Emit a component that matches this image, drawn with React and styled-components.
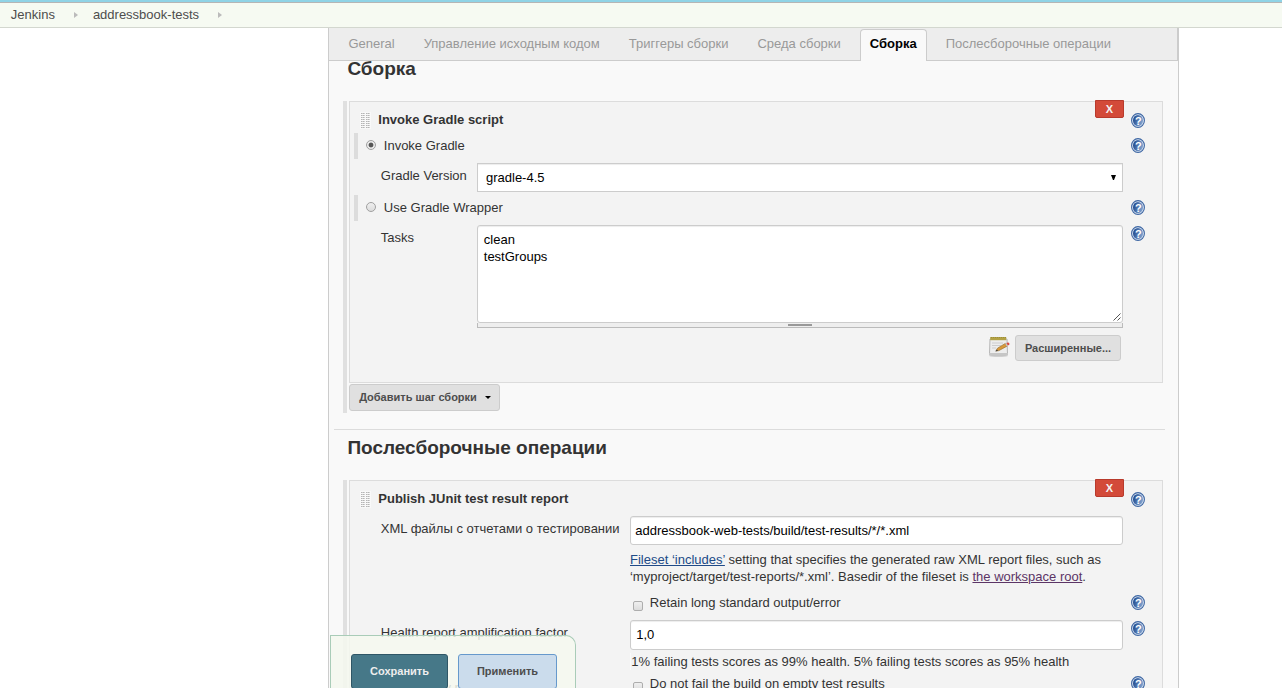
import React from 'react';
import styled, { createGlobalStyle, css } from 'styled-components';

const GlobalStyle = createGlobalStyle`
  * { box-sizing: border-box; }
  body {
    margin: 0;
    background: #fff;
    color: #333;
    font: 13px/17px "Liberation Sans", Arial, sans-serif;
    overflow: hidden;
  }
`;

const Page = styled.div`
  display: flex;
  flex-direction: column;
  height: 100vh;
  overflow: hidden;
`;

const Breadcrumbs = styled.nav`
  flex: none;
  display: flex;
  align-items: center;
  height: 28px;
  padding: 0 10.8px;
  gap: 15px;
  background: #f6faf2;
  border-top: 2px solid #8fd3e6;
  border-bottom: 1px solid #d3d7cf;
  box-shadow: inset 0 1px 0 #b5b5b5;
  color: #4d4d4d;
`;

const Crumb = styled.span`
  display: flex;
  align-items: center;
  gap: 19px;
  white-space: nowrap;
`;

const CrumbArrow = styled.span`
  border: 3px solid transparent;
  border-left: 4px solid #bbb;
  border-right: 0;
  margin-top: 1px;
`;

const Config = styled.main`
  flex: none;
  display: flex;
  flex-direction: column;
  width: 851px;
  height: 660px;
  margin-left: 328px;
  overflow: hidden;
  background: #f9f9f9;
  border: solid #ccc;
  border-width: 0 1px;
`;

const TabBar = styled.div`
  flex: none;
  display: flex;
  align-items: flex-start;
  gap: 9px;
  height: 33px;
  padding: 1px 0 0 9.4px;
  background: #ededed;
  border-right: 1px solid #ccc;
  box-shadow: inset 0 -1px 0 #ccc;
`;

const Tab = styled.span`
  height: 32px;
  padding: 5px 9px 0;
  border: 1px solid transparent;
  border-bottom: 0;
  border-radius: 4px 4px 0 0;
  color: #999;
  white-space: nowrap;
  ${(p) => p.$active && css`
    color: #000;
    font-weight: bold;
    background: #f9f9f9;
    border-color: #ccc;
  `}
`;

const SectionTitle = styled.h2`
  flex: none;
  margin: 0 0 24px 18.4px;
  font-size: 19px;
  line-height: 16px;
  font-weight: bold;
`;

const Divider = styled.hr`
  flex: none;
  width: 831px;
  margin: 16px 0 10px 5px;
  border: 0;
  height: 1px;
  background: #dcdcdc;
`;

const Steps = styled.section`
  flex: none;
  display: flex;
  flex-direction: column;
  align-items: flex-start;
  width: 820px;
  margin-left: 14px;
  padding: 0 0 2px 2px;
  border-left: 4px solid #e0e0e0;
`;

const Step = styled.div`
  position: relative;
  width: 814px;
  height: ${(p) => p.$height}px;
  border: 1px solid #dcdcdc;
  background: #f3f3f3;
`;

const DeleteButton = styled.button`
  position: absolute;
  top: -2px;
  right: 38px;
  width: 29px;
  height: 18px;
  padding: 0;
  border: 1px solid #b83a2c;
  border-radius: 0 0 2px 2px;
  background: #d34a39;
  color: #f3f3f3;
  font: bold 11px/16px "Liberation Sans", sans-serif;
`;

const Row = styled.div`
  display: flex;
  align-items: flex-start;
  height: ${(p) => p.$height}px;
`;

const TitleRow = styled(Row)`
  padding: 9px 0 0 11px;
`;

const StepTitle = styled.span`
  flex: none;
  width: 744.7px;
  margin-left: 8.3px;
  font-weight: bold;
`;

const Grip = styled.span`
  flex: none;
  display: flex;
  gap: 1px;
  width: 9px;
  height: 15px;
  margin-top: 2px;
  box-shadow: 0 0 0 1px #f9f9f9;
  background: #f9f9f9;
`;

const GripColumn = styled.span`
  width: 4px;
  background:
    repeating-linear-gradient(to right, transparent 0 1px, rgba(249, 249, 249, 0.4) 1px 2px),
    repeating-linear-gradient(to bottom, #b5b5b5 0 1px, #f9f9f9 1px 2px);
`;

const RadioRow = styled.label`
  display: flex;
  align-items: flex-start;
  height: 26px;
  margin-left: 4px;
  padding-left: 8px;
  border-left: 4px solid #dcdcdc;
`;

const Radio = styled.span`
  flex: none;
  width: 10px;
  height: 10px;
  margin: 7px 7.8px 0 0;
  border: 1px solid #a0a0a0;
  border-radius: 50%;
  background: ${(p) => (p.$checked
    ? 'radial-gradient(circle, #555 0 2px, #e9e9e9 2.8px)'
    : 'linear-gradient(#efefef, #dcdcdc)')};
`;

const RadioLabel = styled.span`
  flex: none;
  width: 739.2px;
  margin-top: 4px;
`;

const FieldLabel = styled.span`
  flex: none;
  width: ${(p) => p.$width + 0.2}px;
  margin: 8px 0 0 30.8px;
  white-space: nowrap;
`;

const Field = styled.div`
  flex: 0 0 auto;
  display: flex;
  flex-direction: column;
  width: ${(p) => p.$width}px;
  padding-top: 4px;
`;

const controlBox = css`
  border: 1px solid #ccc;
  background: #fff;
  color: #000;
  box-shadow: inset 0 1px 1px rgba(0, 0, 0, 0.075);
`;

const Select = styled.div`
  ${controlBox}
  display: flex;
  align-items: center;
  justify-content: space-between;
  height: 29px;
  padding: 0 6px 0 8px;
`;

const SelectArrow = styled.span`
  width: 5px;
  height: 5px;
  background: #000;
  clip-path: polygon(0 0, 100% 0, 60% 100%, 40% 100%);
`;

const TextInput = styled.div`
  ${controlBox}
  flex: none;
  height: ${(p) => p.$height}px;
  padding: 5px 0 0 ${(p) => p.$indent}px;
  border-radius: 3px;
`;

const TextArea = styled.div`
  ${controlBox}
  display: flex;
  align-items: flex-end;
  justify-content: space-between;
  height: 98px;
  padding: 0 1px 1px 5.8px;
  border-radius: 3px;
`;

const TextAreaContent = styled.span`
  align-self: flex-start;
  padding-top: 5px;
  white-space: pre;
`;

const ResizeBar = styled.div`
  display: flex;
  justify-content: center;
  height: 5px;
  padding-top: 1px;
  border: 1px solid #bbb;
  border-top: 0;
  background: #eee;
`;

const ResizeGrip = styled.span`
  width: 24px;
  height: 2px;
  background: #999;
`;

const FieldNote = styled.p`
  margin: 6px 0 5px;
  white-space: nowrap;
`;

const FieldHint = styled.p`
  margin: 3px 0 0;
  padding-left: 0.3px;
  border-left: 1px solid #fafafa;
  white-space: nowrap;
`;

const Link = styled.a`
  color: ${(p) => (p.$visited ? '#5c3566' : '#204a87')};
  text-decoration: underline;
`;

const CheckLine = styled.label`
  display: flex;
  align-items: flex-start;
  padding-left: 3px;
  white-space: nowrap;
`;

const Checkbox = styled.span`
  flex: none;
  width: 10px;
  height: 10px;
  margin: 7px 6.8px 0 0;
  border: 1px solid #adadad;
  border-radius: 2px;
  background: linear-gradient(#efefef, #dcdcdc);
`;

const HelpSvg = styled.svg`
  flex: none;
  display: block;
  width: 14px;
  height: 15px;
  margin: ${(p) => p.$top}px 0 0 8px;
`;

const AdvancedRow = styled.div`
  display: flex;
  align-items: flex-start;
  justify-content: flex-end;
  gap: 5px;
  padding: 7px 41px 0 0;
`;

const Button = styled.button`
  display: flex;
  align-items: center;
  justify-content: center;
  width: ${(p) => p.$width}px;
  height: ${(p) => p.$height}px;
  padding: 0;
  border: 1px solid ${(p) => p.$border || '#ccc'};
  border-radius: 3px;
  background: ${(p) => p.$fill || '#e0e0e0'};
  color: ${(p) => p.$color || '#4d4d4d'};
  font: bold 11px/17px "Liberation Sans", sans-serif;
  white-space: nowrap;
`;

const Caret = styled.span`
  margin: 0 -1px 0 8px;
  border: 3px solid transparent;
  border-top: 3px solid #000;
  border-bottom: 0;
`;

const AddStep = styled.div`
  padding-top: 1px;
`;

const SaveBar = styled.div`
  position: fixed;
  left: 330px;
  bottom: 0;
  display: flex;
  gap: 10px;
  width: 246px;
  height: 53px;
  padding: 18px 0 0 20px;
  border: solid #a9ccb8;
  border-width: 1px 1px 0 1px;
  border-top-right-radius: 10px;
  background: rgba(244, 248, 239, 0.85);
`;

function HelpIcon({ top = 5 }) {
  return (
    <HelpSvg $top={top} viewBox="0 0 14 15">
      <defs>
        <linearGradient id="helpFill" x1="0" y1="0" x2="1" y2="0.3">
          <stop offset="0" stopColor="#153f82" />
          <stop offset="0.5" stopColor="#4870ac" />
          <stop offset="1" stopColor="#7c9dca" />
        </linearGradient>
      </defs>
      <ellipse cx="7" cy="7.5" rx="6.4" ry="6.9" fill="#dfe8f4" stroke="#3d66a3" strokeWidth="1.1" />
      <ellipse cx="7" cy="7.5" rx="5" ry="5.5" fill="url(#helpFill)" />
      <text x="7.3" y="11.5" textAnchor="middle" fontFamily="Liberation Sans, sans-serif" fontWeight="bold" fontSize="11" fill="#fff">?</text>
    </HelpSvg>
  );
}

function NotepadIcon() {
  return (
    <svg width="22" height="22" viewBox="0 0 22 22">
      <ellipse cx="10.5" cy="20.7" rx="9.5" ry="1" fill="#c4c4c4" />
      <path d="M2 4h17l.5 15.5h-18z" fill="#ededed" stroke="#b5b5b5" />
      <path d="M1 18h19v2H1z" fill="#c6c6c6" />
      <path d="M2.2 2h16v3.2h-16z" fill="#b3a245" />
      <path d="M3 2.5h15" stroke="#9c8d3a" strokeDasharray="1 1" />
      <path d="M4 8h11M4 10.5h9M4 13h4" stroke="#cdcdcd" />
      <path d="M8 16l1.5-2.8L17.4 8.4l1.5 2.8-8 4.4z" fill="#d9993a" stroke="#98702f" strokeWidth=".7" />
      <path d="M7.2 16.5l1.6-2 1.3 1.3z" fill="#444" />
      <path d="M17.2 8.6l1.2-.7 1.5 2.7-1.3.7z" fill="#c4c4c4" />
      <path d="M18.4 7.9q2.4-.8 3 .5t-1.5 2.2z" fill="#d94b43" />
    </svg>
  );
}

function GripHandle() {
  return <Grip><GripColumn /><GripColumn /></Grip>;
}

function StepHeader({ title }) {
  return (
    <>
      <DeleteButton>X</DeleteButton>
      <TitleRow $height={31}>
        <GripHandle />
        <StepTitle>{title}</StepTitle>
        <HelpIcon top={2} />
      </TitleRow>
    </>
  );
}

function RadioOption({ label, checked }) {
  return (
    <RadioRow>
      <Radio $checked={checked} />
      <RadioLabel>{label}</RadioLabel>
      <HelpIcon />
    </RadioRow>
  );
}

function CheckRow({ label, text }) {
  return (
    <Row $height={26}>
      <FieldLabel $width={249}>{label}</FieldLabel>
      <Field $width={493}>
        <CheckLine><Checkbox />{text}</CheckLine>
      </Field>
      <HelpIcon />
    </Row>
  );
}

const tabs = ['General', 'Управление исходным кодом', 'Триггеры сборки', 'Среда сборки', 'Сборка', 'Послесборочные операции'];

export default function App() {
  return (
    <Page>
      <GlobalStyle />
      <Breadcrumbs>
        {['Jenkins', 'addressbook-tests'].map((name) => (
          <Crumb key={name}>{name}<CrumbArrow /></Crumb>
        ))}
      </Breadcrumbs>
      <Config>
        <TabBar>
          {tabs.map((name) => <Tab key={name} $active={name === 'Сборка'}>{name}</Tab>)}
        </TabBar>

        <SectionTitle>Сборка</SectionTitle>
        <Steps>
          <Step $height={282}>
            <StepHeader title="Invoke Gradle script" />
            <RadioOption label="Invoke Gradle" checked />
            <Row $height={36}>
              <FieldLabel $width={96}>Gradle Version</FieldLabel>
              <Field $width={646}>
                <Select>gradle-4.5<SelectArrow /></Select>
              </Field>
            </Row>
            <RadioOption label="Use Gradle Wrapper" />
            <Row $height={107}>
              <FieldLabel $width={96}>Tasks</FieldLabel>
              <Field $width={646}>
                <TextArea>
                  <TextAreaContent>{'clean\ntestGroups'}</TextAreaContent>
                  <svg width="8" height="8" viewBox="0 0 8 8">
                    <path d="M0.5 7.5l7-7M4.5 7.5l3-3" stroke="#555" fill="none" />
                  </svg>
                </TextArea>
                <ResizeBar><ResizeGrip /></ResizeBar>
              </Field>
              <HelpIcon />
            </Row>
            <AdvancedRow>
              <NotepadIcon />
              <Button $width={106} $height={26}>Расширенные...</Button>
            </AdvancedRow>
          </Step>
          <AddStep>
            <Button $width={151} $height={27}>Добавить шаг сборки<Caret /></Button>
          </AddStep>
        </Steps>

        <Divider />

        <SectionTitle>Послесборочные операции</SectionTitle>
        <Steps>
          <Step $height={300}>
            <StepHeader title="Publish JUnit test result report" />
            <Row $height={78}>
              <FieldLabel $width={249}>XML файлы с отчетами о тестировании</FieldLabel>
              <Field $width={493}>
                <TextInput $height={29} $indent={4.3}>addressbook-web-tests/build/test-results/*/*.xml</TextInput>
                <FieldNote>
                  <Link>Fileset ‘includes’</Link> setting that specifies the generated raw XML report files, such as<br />
                  ‘myproject/target/test-reports/*.xml’. Basedir of the fileset is <Link $visited>the workspace root</Link>.
                </FieldNote>
              </Field>
            </Row>
            <CheckRow text="Retain long standard output/error" />
            <Row $height={55}>
              <FieldLabel $width={249}>Health report amplification factor</FieldLabel>
              <Field $width={493}>
                <TextInput $height={30} $indent={5.2}>1,0</TextInput>
                <FieldHint>1% failing tests scores as 99% health. 5% failing tests scores as 95% health</FieldHint>
              </Field>
              <HelpIcon />
            </Row>
            <CheckRow label="Allow empty results" text="Do not fail the build on empty test results" />
          </Step>
        </Steps>
      </Config>

      <SaveBar>
        <Button $width={97} $height={35} $fill="#467888" $border="#2f5666" $color="#eee">Сохранить</Button>
        <Button $width={99} $height={35} $fill="#cbdcec" $border="#6699cc">Применить</Button>
      </SaveBar>
    </Page>
  );
}
